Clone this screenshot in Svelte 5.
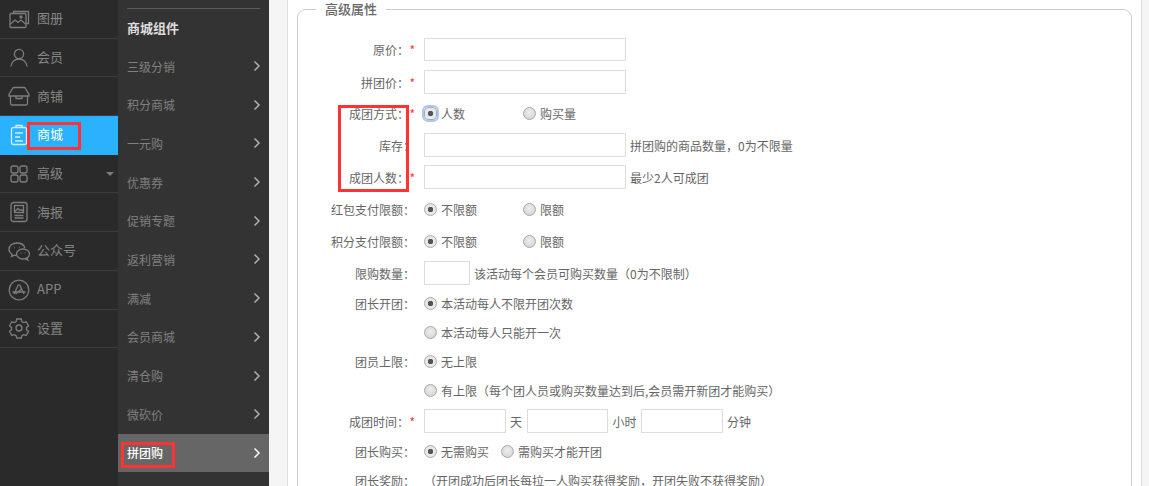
<script>
  const menu = [
    { key: 'album', label: '图册' },
    { key: 'member', label: '会员' },
    { key: 'shop', label: '商铺' },
    { key: 'mall', label: '商城', active: true },
    { key: 'grid', label: '高级', caret: true },
    { key: 'poster', label: '海报' },
    { key: 'wechat', label: '公众号' },
    { key: 'app', label: 'APP' },
    { key: 'gear', label: '设置' }
  ];
  const subItems = ['三级分销', '积分商城', '一元购', '优惠券', '促销专题', '返利营销', '满减', '会员商城', '清仓购', '微砍价', '拼团购'];
</script>

{#snippet radio(text, on = false, focus = false, wide = true)}
  <span class="radio-item" class:wide>
    <span class="radio" class:on class:focus></span>{text}
  </span>
{/snippet}

{#snippet label(text, req = false)}
  <span class="label">{text}&#xFF1A;{#if req}<i class="star">*</i>{/if}</span>
{/snippet}

<div class="page">
  <aside class="sidebar">
    {#each menu as item}
      <div class="side-item" class:active={item.active}>
        <span class="side-icon">
          <svg viewBox="0 0 22 22" width="22" height="22" fill="none" stroke="currentColor" stroke-width="1.3">
            {#if item.key === 'album'}
              <path d="M5.500 5V3.500h15v12H18" />
              <rect x="2" y="5.500" width="16" height="14" rx="1" />
              <path d="M2.500 16l4.500-4 3 2.500 3-2.500 4.500 4" />
              <circle cx="13" cy="9" r="1" />
            {:else if item.key === 'member'}
              <circle cx="11" cy="7" r="4.600" />
              <path d="M3 19.500c.6-4.500 3.800-7.500 8-7.500s7.400 3 8 7.500" />
            {:else if item.key === 'shop'}
              <path d="M4.500 3.500c.3-.7.8-1 1.500-1h10c.7 0 1.200.3 1.500 1L21 9.500V11H1V9.500z" />
              <path d="M2.500 11v7.500c0 1 .7 1.500 1.500 1.500h14c.8 0 1.500-.5 1.500-1.500V11" />
              <path d="M8 11v2.500h6V11" />
            {:else if item.key === 'mall'}
              <rect x="3.500" y="3.500" width="15" height="17" rx="2" />
              <path d="M8 3.500V1.500h6v2M7 9h8M7 13h5M7 17h8" />
            {:else if item.key === 'grid'}
              <rect x="3" y="3" width="7" height="7" rx="2" />
              <rect x="12" y="3" width="7" height="7" rx="2" />
              <rect x="3" y="12" width="7" height="7" rx="2" />
              <rect x="12" y="12" width="7" height="7" rx="2" />
            {:else if item.key === 'poster'}
              <rect x="3" y="1.500" width="16" height="19" rx="2.500" />
              <rect x="6.500" y="4.500" width="9" height="7" />
              <path d="M7 10.500l3-3 2 2 1.500-1 2 2M6.500 14.500h9M6.500 17h9" />
            {:else if item.key === 'wechat'}
              <path d="M8.500 15.500c-.8 0-1.500-.1-2.200-.3l-2.800 1.400.5-2.400C2.200 13 1 11.300 1 9.300 1 5.800 4.500 3 9 3c3.800 0 7 2 7.800 5" />
              <ellipse cx="15" cy="14" rx="6.500" ry="5" />
              <path d="M19 18l.8 2-2.600-1.200" />
              <path d="M6 7.500h.6M11 7.500h.6M12.700 13h.6M16.700 13h.6" stroke-width="1.600" />
            {:else if item.key === 'app'}
              <circle cx="11" cy="11" r="9.800" />
              <path d="M11.500 5.500l4.500 9.500M10.500 5.500L6 15M4.500 13h13M14 9.500l-6.500 5.500" />
            {:else}
              <path d="M8.700 2h4.600l.6 2.600 1.700 1 2.600-.8 2.300 4-2 1.800v2l2 1.800-2.300 4-2.600-.8-1.700 1-.6 2.400H8.700l-.6-2.400-1.700-1-2.600.8-2.300-4 2-1.800v-2l-2-1.800 2.300-4 2.600.8 1.700-1z" />
              <circle cx="11" cy="11" r="3" />
            {/if}
          </svg>
        </span>
        <span class="side-label">{item.label}</span>
        {#if item.caret}<span class="caret"></span>{/if}
      </div>
    {/each}
  </aside>

  <nav class="submenu">
    <div class="sub-title">商城组件</div>
    {#each subItems as name}
      <div class="sub-item" class:active={name === '拼团购'}>
        <span>{name}</span>
        <svg viewBox="0 0 8 12" width="8" height="12" fill="none" stroke="currentColor" stroke-width="1.500"><path d="M1.500 1.500L6 6l-4.500 4.500" /></svg>
      </div>
    {/each}
  </nav>

  <main class="main">
    <div class="panel">
      <fieldset>
        <legend>高级属性</legend>

        <div class="row first">{@render label('原价', true)}<input class="field" /></div>
        <div class="row">{@render label('拼团价', true)}<input class="field" /></div>
        <div class="row pull">
          {@render label('成团方式', true)}
          {@render radio('人数', true, true)}
          {@render radio('购买量')}
        </div>
        <div class="row">{@render label('库存')}<input class="field" /><span class="hint">拼团购的商品数量&#xFF0C;0为不限量</span></div>
        <div class="row">{@render label('成团人数', true)}<input class="field" /><span class="hint">最少2人可成团</span></div>
        <div class="row">
          {@render label('红包支付限额')}
          {@render radio('不限额', true)}
          {@render radio('限额')}
        </div>
        <div class="row">
          {@render label('积分支付限额')}
          {@render radio('不限额', true)}
          {@render radio('限额')}
        </div>
        <div class="row">{@render label('限购数量')}<input class="field small" /><span class="hint">该活动每个会员可购买数量&#xFF08;0为不限制&#xFF09;</span></div>
        <div class="row tight">{@render label('团长开团')}{@render radio('本活动每人不限开团次数', true)}</div>
        <div class="row tight"><span class="label"></span>{@render radio('本活动每人只能开一次')}</div>
        <div class="row tight">{@render label('团员上限')}{@render radio('无上限', true)}</div>
        <div class="row tight"><span class="label"></span>{@render radio('有上限\uFF08每个团人员或购买数量达到后,会员需开新团才能购买\uFF09')}</div>
        <div class="row time">
          {@render label('成团时间', true)}
          <input class="field mid" /><span class="unit">天</span>
          <input class="field mid" /><span class="unit">小时</span>
          <input class="field mid" /><span class="unit">分钟</span>
        </div>
        <div class="row tight">
          {@render label('团长购买')}
          {@render radio('无需购买', true, false, false)}
          {@render radio('需购买才能开团', false, false, false)}
        </div>
        <div class="row tight">{@render label('团长奖励')}<span class="note">&#xFF08;开团成功后团长每拉一人购买获得奖励&#xFF0C;开团失败不获得奖励&#xFF09;</span></div>
      </fieldset>
    </div>
  </main>

  <!-- red annotation boxes drawn over the screenshot -->
  <span class="mark mark-mall"></span>
  <span class="mark mark-group"></span>
  <span class="mark mark-form"></span>
</div>

<style>
  :global(body) {
    margin: 0;
    overflow: hidden;
  }

  .page {
    position: relative;
    display: flex;
    width: 1149px;
    height: 486px;
    overflow: hidden;
    font-family: "Noto Sans CJK SC", "Liberation Sans", sans-serif;
    font-size: 12px;
    color: #666;
  }

  .sidebar {
    flex: none;
    width: 118px;
    background: #2a2a2a;
    color: #858585;
    font-size: 13px;
  }

  .side-item {
    display: flex;
    align-items: center;
    box-sizing: border-box;
    height: 38.7px;
    border-bottom: 1px solid #3d3d3d;
  }

  .side-item.active {
    background: #2ab2ff;
    color: #fff;
    border-bottom-color: #2ab2ff;
  }

  .side-item.active .side-icon {
    color: #cfeeff;
  }

  .side-icon {
    display: flex;
    justify-content: center;
    flex: none;
    width: 37px;
    color: #7d7d7d;
  }

  .side-label {
    padding-bottom: 2px;
  }

  .caret {
    margin-left: auto;
    margin-right: 4px;
    border-style: solid;
    border-width: 4px 4px 0;
    border-color: #7d7d7d transparent transparent;
  }

  .submenu {
    flex: none;
    box-sizing: border-box;
    width: 151px;
    padding-top: 8px;
    background: #333;
    color: #808080;
  }

  .sub-title {
    display: flex;
    align-items: center;
    height: 38.7px;
    margin: 0 9px;
    border-top: 1px solid #5a5a5a;
    box-sizing: border-box;
    color: #ddd;
    font-size: 13px;
    font-weight: 700;
  }

  .sub-item {
    display: flex;
    align-items: center;
    justify-content: space-between;
    height: 38.7px;
    padding: 0 8px 0 9px;
  }

  .sub-item svg {
    color: #aab0b8;
  }

  .sub-item.active {
    background: #666;
    color: #fff;
    font-weight: 500;
  }

  .sub-item.active svg {
    color: #fff;
  }

  .main {
    flex: 1;
    padding: 0 7px 0 18px;
    background: #f5f5f5;
  }

  .panel {
    box-sizing: border-box;
    height: 100%;
    padding: 0 9px;
    background: #fff;
    border-left: 1px solid #ddd;
    border-right: 1px solid #ddd;
  }

  fieldset {
    min-height: 600px;
    margin: 0;
    padding: 15px 0 0;
    border: 1px solid #ccc;
    border-radius: 9px;
  }

  legend {
    margin-left: 18px;
    padding: 0 9px;
    height: 18px;
    line-height: 18px;
    font-size: 13px;
    font-weight: 500;
    color: #666;
  }

  .row {
    display: flex;
    align-items: center;
    height: 32px;
  }

  .row.first {
    height: 33px;
  }

  .row.first .field {
    height: 23px;
  }

  .row.pull {
    margin-top: -1px;
  }

  .row.tight {
    height: 29px;
  }

  .row.time {
    height: 32px;
  }

  .label {
    flex: none;
    box-sizing: border-box;
    width: 117px;
    margin-right: 9px;
    text-align: right;
  }

  .star {
    display: inline-block;
    width: 6px;
    font-style: normal;
    color: #f33;
  }

  .field {
    box-sizing: border-box;
    width: 202px;
    height: 24px;
    padding: 0;
    border: 1px solid #ddd;
    background: #fff;
    outline: none;
  }

  .field.small {
    width: 46px;
  }

  .field.mid {
    width: 81.500px;
  }

  .hint {
    margin-left: 4px;
  }

  .unit {
    margin: 0 4.500px;
  }

  .radio-item {
    display: flex;
    align-items: center;
    margin-right: 12px;
  }

  .radio-item.wide {
    min-width: 99px;
    margin-right: 0;
  }

  .radio {
    box-sizing: border-box;
    flex: none;
    width: 13px;
    height: 13px;
    margin-right: 4px;
    border: 1px solid #aaa;
    border-radius: 50%;
    background: radial-gradient(circle at 50% 40%, #eee, #cfcfcf);
  }

  .radio.on {
    background: radial-gradient(circle, #555 0 2.500px, #e8e8e8 3px);
    border-color: #aaa;
  }

  .radio.focus {
    outline: 2px solid #a9c8f5;
    border-radius: 4px;
  }

  .mark {
    position: absolute;
    box-sizing: border-box;
    border: 3px solid #f33;
  }

  .mark-mall {
    left: 27px;
    top: 122px;
    width: 54px;
    height: 28px;
  }

  .mark-group {
    left: 121px;
    top: 442px;
    width: 54px;
    height: 26px;
  }

  .mark-form {
    left: 338px;
    top: 105px;
    width: 71px;
    height: 87px;
  }
</style>
